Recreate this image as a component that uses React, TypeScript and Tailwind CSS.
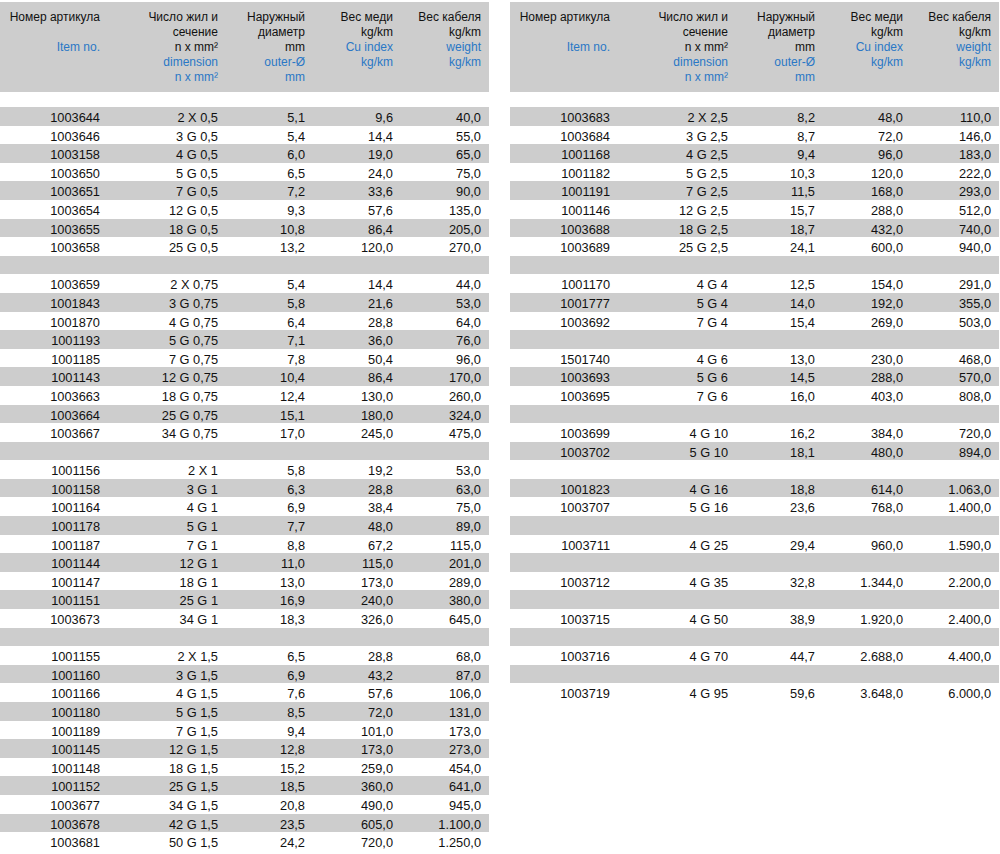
import React from "react";

type Row = string[] | null;

const left: Row[] = [
  ["1003644", "2 X 0,5", "5,1", "9,6", "40,0"],
  ["1003646", "3 G 0,5", "5,4", "14,4", "55,0"],
  ["1003158", "4 G 0,5", "6,0", "19,0", "65,0"],
  ["1003650", "5 G 0,5", "6,5", "24,0", "75,0"],
  ["1003651", "7 G 0,5", "7,2", "33,6", "90,0"],
  ["1003654", "12 G 0,5", "9,3", "57,6", "135,0"],
  ["1003655", "18 G 0,5", "10,8", "86,4", "205,0"],
  ["1003658", "25 G 0,5", "13,2", "120,0", "270,0"],
  null,
  ["1003659", "2 X 0,75", "5,4", "14,4", "44,0"],
  ["1001843", "3 G 0,75", "5,8", "21,6", "53,0"],
  ["1001870", "4 G 0,75", "6,4", "28,8", "64,0"],
  ["1001193", "5 G 0,75", "7,1", "36,0", "76,0"],
  ["1001185", "7 G 0,75", "7,8", "50,4", "96,0"],
  ["1001143", "12 G 0,75", "10,4", "86,4", "170,0"],
  ["1003663", "18 G 0,75", "12,4", "130,0", "260,0"],
  ["1003664", "25 G 0,75", "15,1", "180,0", "324,0"],
  ["1003667", "34 G 0,75", "17,0", "245,0", "475,0"],
  null,
  ["1001156", "2 X 1", "5,8", "19,2", "53,0"],
  ["1001158", "3 G 1", "6,3", "28,8", "63,0"],
  ["1001164", "4 G 1", "6,9", "38,4", "75,0"],
  ["1001178", "5 G 1", "7,7", "48,0", "89,0"],
  ["1001187", "7 G 1", "8,8", "67,2", "115,0"],
  ["1001144", "12 G 1", "11,0", "115,0", "201,0"],
  ["1001147", "18 G 1", "13,0", "173,0", "289,0"],
  ["1001151", "25 G 1", "16,9", "240,0", "380,0"],
  ["1003673", "34 G 1", "18,3", "326,0", "645,0"],
  null,
  ["1001155", "2 X 1,5", "6,5", "28,8", "68,0"],
  ["1001160", "3 G 1,5", "6,9", "43,2", "87,0"],
  ["1001166", "4 G 1,5", "7,6", "57,6", "106,0"],
  ["1001180", "5 G 1,5", "8,5", "72,0", "131,0"],
  ["1001189", "7 G 1,5", "9,4", "101,0", "173,0"],
  ["1001145", "12 G 1,5", "12,8", "173,0", "273,0"],
  ["1001148", "18 G 1,5", "15,2", "259,0", "454,0"],
  ["1001152", "25 G 1,5", "18,5", "360,0", "641,0"],
  ["1003677", "34 G 1,5", "20,8", "490,0", "945,0"],
  ["1003678", "42 G 1,5", "23,5", "605,0", "1.100,0"],
  ["1003681", "50 G 1,5", "24,2", "720,0", "1.250,0"],
];

const right: Row[] = [
  ["1003683", "2 X 2,5", "8,2", "48,0", "110,0"],
  ["1003684", "3 G 2,5", "8,7", "72,0", "146,0"],
  ["1001168", "4 G 2,5", "9,4", "96,0", "183,0"],
  ["1001182", "5 G 2,5", "10,3", "120,0", "222,0"],
  ["1001191", "7 G 2,5", "11,5", "168,0", "293,0"],
  ["1001146", "12 G 2,5", "15,7", "288,0", "512,0"],
  ["1003688", "18 G 2,5", "18,7", "432,0", "740,0"],
  ["1003689", "25 G 2,5", "24,1", "600,0", "940,0"],
  null,
  ["1001170", "4 G 4", "12,5", "154,0", "291,0"],
  ["1001777", "5 G 4", "14,0", "192,0", "355,0"],
  ["1003692", "7 G 4", "15,4", "269,0", "503,0"],
  null,
  ["1501740", "4 G 6", "13,0", "230,0", "468,0"],
  ["1003693", "5 G 6", "14,5", "288,0", "570,0"],
  ["1003695", "7 G 6", "16,0", "403,0", "808,0"],
  null,
  ["1003699", "4 G 10", "16,2", "384,0", "720,0"],
  ["1003702", "5 G 10", "18,1", "480,0", "894,0"],
  null,
  ["1001823", "4 G 16", "18,8", "614,0", "1.063,0"],
  ["1003707", "5 G 16", "23,6", "768,0", "1.400,0"],
  null,
  ["1003711", "4 G 25", "29,4", "960,0", "1.590,0"],
  null,
  ["1003712", "4 G 35", "32,8", "1.344,0", "2.200,0"],
  null,
  ["1003715", "4 G 50", "38,9", "1.920,0", "2.400,0"],
  null,
  ["1003716", "4 G 70", "44,7", "2.688,0", "4.400,0"],
  null,
  ["1003719", "4 G 95", "59,6", "3.648,0", "6.000,0"],
];

const cols = "grid grid-cols-[100px_118px_87px_88px_88px] pr-[8px]";

function Header() {
  const B = ({ children }: { children: React.ReactNode }) => (
    <div className="text-[#2a78c6]">{children}</div>
  );
  return (
    <div className={`${cols} bg-[#cdcdcd] py-[7.5px] text-[12px] leading-[15px] text-right`}>
      <div>
        <div>Номер артикула</div>
        <div>&nbsp;</div>
        <B>Item no.</B>
      </div>
      <div>
        <div>Число жил и</div>
        <div>сечение</div>
        <div>n x mm²</div>
        <B>dimension</B>
        <B>n x mm²</B>
      </div>
      <div>
        <div>Наружный</div>
        <div>диаметр</div>
        <div>mm</div>
        <B>outer-Ø</B>
        <B>mm</B>
      </div>
      <div>
        <div>Вес меди</div>
        <div>kg/km</div>
        <B>Cu index</B>
        <B>kg/km</B>
      </div>
      <div>
        <div>Вес кабеля</div>
        <div>kg/km</div>
        <B>weight</B>
        <B>kg/km</B>
      </div>
    </div>
  );
}

function Table({ rows }: { rows: Row[] }) {
  return (
    <div className="w-[489px] shrink-0">
      <Header />
      <div className="h-[15px]" />
      <div className="text-[12.8px]">
        {rows.map((r, i) => (
          <div
            key={i}
            className={`${cols} h-[18.6px] pt-[3px] leading-[15.6px] text-right ${
              i % 2 === 0 ? "bg-[#cdcdcd]" : "bg-white"
            }`}
          >
            {r
              ? r.map((c, j) => <div key={j}>{c}</div>)
              : [0, 1, 2, 3, 4].map((j) => <div key={j} />)}
          </div>
        ))}
      </div>
    </div>
  );
}

export default function App() {
  return (
    <div
      className="w-[1000px] h-[854px] bg-white text-[#111] flex gap-[21px] pt-[2px] overflow-hidden"
      style={{ fontFamily: '"Liberation Sans", Arial, sans-serif' }}
    >
      <Table rows={left} />
      <Table rows={right} />
    </div>
  );
}
